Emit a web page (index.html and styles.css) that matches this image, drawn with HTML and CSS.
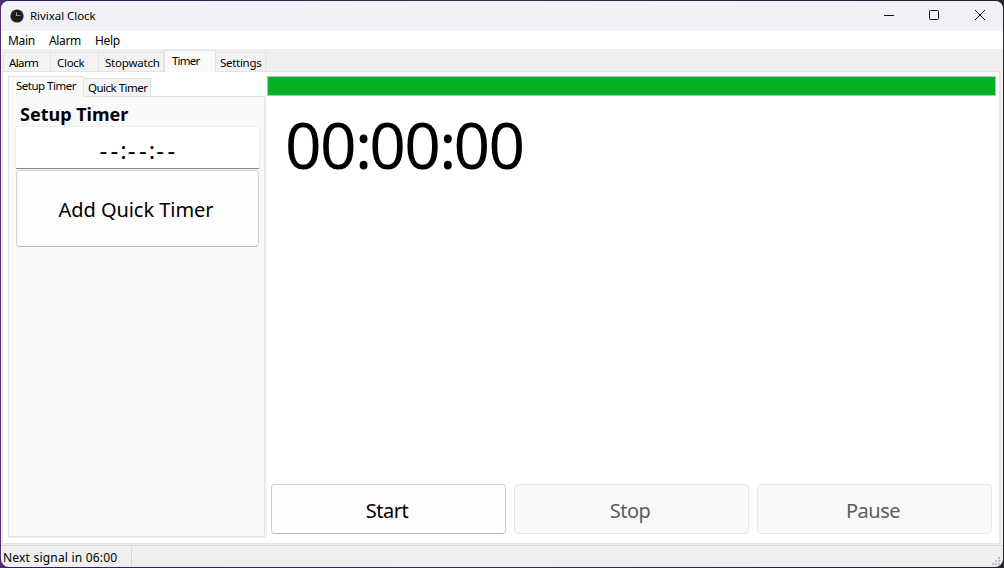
FILE: index.html
```html
<!DOCTYPE html>
<html lang="en">
<head>
<meta charset="utf-8">
<title>Rivixal Clock</title>
<link rel="stylesheet" href="styles.css">
</head>
<body>
<div class="window">
  <header class="titlebar">
    <svg class="app-icon" width="14" height="14" viewBox="0 0 14 14">
      <circle cx="7" cy="7" r="6.6" fill="#1c1c1c"/>
      <circle cx="7" cy="7" r="5.6" fill="none" stroke="#3c3c3c" stroke-width=".8" stroke-dasharray="1 1.9"/>
      <path d="M6.5 3.5V7" stroke="#aaa" fill="none"/>
      <path d="M6.5 6.500H10.5" stroke="#a77" fill="none"/>
    </svg>
    <span class="title">Rivixal Clock</span>
    <svg class="controls" width="120" height="30" viewBox="0 0 120 30" fill="none" stroke="#111">
      <path d="M4 14.5H14"/>
      <rect x="49.5" y="9.500" width="9" height="9" rx="1"/>
      <path d="M95 9L105 19M105 9L95 19"/>
    </svg>
  </header>
  <nav class="menubar"><span class="m-main">Main</span><span class="m-alarm">Alarm</span><span class="m-help">Help</span></nav>
  <div class="tabs">
    <div class="tab t-alarm">Alarm</div>
    <div class="tab t-clock">Clock</div>
    <div class="tab t-stopwatch">Stopwatch</div>
    <div class="tab t-timer active">Timer</div>
    <div class="tab t-settings">Settings</div>
  </div>
  <main class="page">
    <section class="side">
      <div class="subtabs">
        <div class="subtab s-setup active">Setup Timer</div>
        <div class="subtab s-quick">Quick Timer</div>
      </div>
      <div class="setup">
        <h1>Setup Timer</h1>
        <div class="time-input">--<span>:</span>--<span>:</span>--</div>
        <button class="btn add">Add Quick Timer</button>
      </div>
    </section>
    <section class="timer">
      <div class="progress"></div>
      <div class="clock">00<span>:</span>00<span>:</span>00</div>
      <div class="actions">
        <button class="btn">Start</button>
        <button class="btn stop" disabled>Stop</button>
        <button class="btn pause" disabled>Pause</button>
      </div>
    </section>
  </main>
  <footer class="status">
    <span class="signal">Next signal in 06:00</span>
    <svg class="grip" width="9" height="9" viewBox="0 0 9 9" fill="#bfbfbf">
      <path d="M6 0h2v2h-2zM3 3h2v2h-2zM6 3h2v2h-2zM0 6h2v2h-2zM3 6h2v2h-2zM6 6h2v2h-2z"/>
    </svg>
  </footer>
</div>
</body>
</html>
```
FILE: styles.css
```css
* { box-sizing: border-box; }
body {
  margin: 0;
  padding: 1px;
  width: 1004px;
  height: 568px;
  overflow: hidden;
  background: linear-gradient(90deg, #55306e 0, #2b2058 10px, #302a50 50%, #24202f 990px, #29282c 100%);
  font-family: "Noto Sans", "Open Sans", sans-serif;
  font-size: 12px;
  color: #000;
}
.window {
  height: 566px;
  display: flex;
  flex-direction: column;
  background: #efefef;
  border-radius: 8px;
  overflow: hidden;
  white-space: nowrap;
}
.titlebar {
  height: 30px;
  flex: none;
  display: flex;
  align-items: center;
  background: #f3f0f8;
  padding-left: 9px;
}
.title { margin-left: 6px; padding-bottom: 2px; font-size: 11.5px; letter-spacing: -.05px; }
.controls { margin-left: auto; margin-right: 3px; }
.menubar {
  height: 18px;
  flex: none;
  display: flex;
  background: #fff;
  padding-left: 7px;
  line-height: 19px;
  font-size: 12px;
  letter-spacing: -.35px;
}
.m-main { width: 41px; }
.m-alarm { width: 46px; }
.tabs {
  height: 22px;
  flex: none;
  display: flex;
  align-items: flex-end;
  padding-left: 2px;
  font-size: 11.5px;
  letter-spacing: -.3px;
}
.tab {
  height: 19px;
  border: 1px solid #e3e3e3;
  border-left: 0;
  border-bottom: 0;
  background: #f3f3f3;
  line-height: 19px;
}
.t-alarm { width: 48px; border-left: 1px solid #e3e3e3; padding-left: 5px; letter-spacing: -.6px; }
.t-clock { width: 48px; padding-left: 6px; }
.t-stopwatch { width: 65px; padding-left: 6px; letter-spacing: -.2px; }
.t-timer { width: 52px; padding-left: 7px; letter-spacing: -.8px; }
.t-settings { width: 50px; padding-left: 4px; }
.tab.active {
  height: 22px;
  margin-bottom: -1px;
  background: #f9f9f9;
  border-left: 1px solid #e3e3e3;
  z-index: 1;
}
.page {
  height: 473px;
  flex: none;
  margin: 0 2px 0 1px;
  border: 1px solid #e3e3e3;
  border-right: 2px solid #e8e8e8;
  background: #fff;
  display: flex;
  padding: 4px 3px 5px 5px;
}
.side { width: 259px; display: flex; flex-direction: column; }
.subtabs {
  height: 20px;
  flex: none;
  display: flex;
  align-items: flex-end;
  font-size: 11.5px;
  letter-spacing: -.5px;
}
.subtab {
  height: 18px;
  width: 67px;
  border: 1px solid #e3e3e3;
  border-left: 0;
  border-bottom: 0;
  background: #f3f3f3;
  line-height: 17px;
  padding-left: 4px;
}
.subtab.active {
  height: 21px;
  width: 76px;
  margin-bottom: -1px;
  background: #f9f9f9;
  border-left: 1px solid #e3e3e3;
  padding-left: 7px;
  z-index: 1;
}
.setup {
  height: 441px;
  width: 257px;
  border: 1px solid #e3e3e3;
  background: #f9f9f9;
  box-shadow: 2px 1px #f3f3f3;
  padding: 5px 5px 0 6px;
}
h1 {
  margin: 0 0 0 5px;
  height: 24px;
  font-size: 18px;
  line-height: 25px;
  letter-spacing: 0;
}
.time-input {
  width: 245px;
  height: 43px;
  border: 1px solid #ececec;
  border-bottom: 1px solid #868686;
  border-radius: 2px;
  background: #fff;
  padding-left: 3px;
  text-align: center;
  font-size: 24px;
  line-height: 45px;
  letter-spacing: 3.4px;
}
.time-input span { letter-spacing: 1.2px; margin-left: -1.5px; }
.btn {
  display: block;
  border: 1px solid #d0d0d0;
  border-bottom-color: #bababa;
  border-radius: 4px;
  background: #fdfdfd;
  color: #000;
  font: 20px/1 "Noto Sans", sans-serif;
  letter-spacing: -.5px;
  padding: 3px 3px 0 0;
}
.btn:disabled { background: #f9f9f9; border-color: #e8e8e8; color: #5c5c5c; }
.btn.add { width: 243px; height: 77px; margin: 1px 0 0 1px; padding-top: 2px; letter-spacing: -.05px; }
.timer {
  flex: 1;
  display: flex;
  flex-direction: column;
}
.progress { height: 20px; flex: none; background: #06b025; border: 1px solid #bcbcbc; }
.clock {
  font-size: 64px;
  font-weight: 400;
  line-height: 88px;
  padding: 5px 0 0 18px;
  letter-spacing: -1.6px;
}
.clock span { letter-spacing: -3px; }
.actions {
  margin-top: auto;
  margin-bottom: 4px;
  padding: 0 4px;
  display: grid;
  grid-template-columns: repeat(3, 235px);
  gap: 8px;
  height: 50px;
}
.status {
  flex: 1;
  margin-top: 1px;
  border-top: 1px solid #d7d7d7;
  display: flex;
}
.signal {
  width: 131px;
  height: 19px;
  margin-top: 1px;
  padding-left: 2px;
  border-right: 1px solid #d7d7d7;
  line-height: 22px;
  font-size: 12px;
  letter-spacing: .2px;
}
.grip { margin: 11px 2px 0 auto; }
```
